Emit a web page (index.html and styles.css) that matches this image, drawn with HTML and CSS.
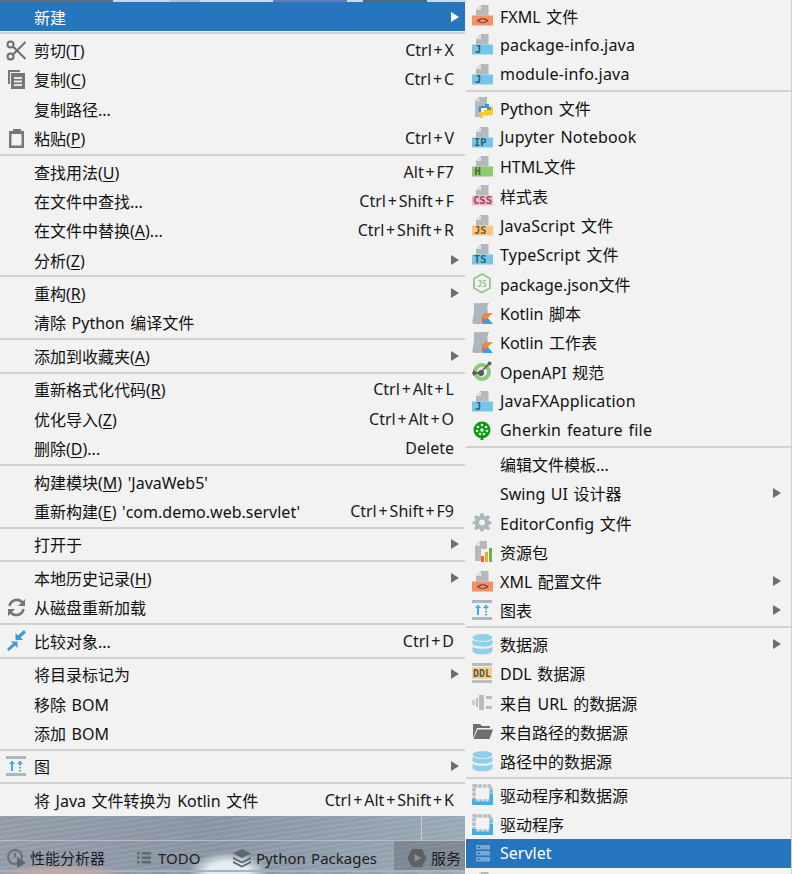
FILE: index.html
```html
<!DOCTYPE html>
<html lang="zh-CN">
<head>
<meta charset="utf-8">
<title>Context menu</title>
<link rel="stylesheet" href="styles.css">
</head>
<body>
<svg class="defs" width="0" height="0" aria-hidden="true">
  <defs>
    <symbol id="page" viewBox="0 0 21 21">
      <path d="M9 0H16.500V10.500H4V5Z" fill="#b3b9bd"/>
      <path d="M9 .5V5H4.300Z" fill="#dfe1e2"/>
    </symbol>
    <symbol id="diagram" viewBox="0 0 21 21">
      <rect x="0" y="0" width="20" height="3" fill="#adb6bb"/>
      <rect x="0" y="17" width="20" height="3" fill="#adb6bb"/>
      <path d="M6 4.500 9 8H7V15H5V8H3ZM14 4.500 17 8H15V9.500H13V8H11ZM13 11H15V12.500H13ZM13 14H15V15.500H13Z" fill="#3fb0de"/>
    </symbol>
    <symbol id="db" viewBox="0 0 21 21">
      <ellipse cx="10.500" cy="3.500" rx="10" ry="3.500" fill="#8ed0ec"/>
      <path d="M.5 5.500C2 8.500 19 8.500 20.500 5.500V10C19 13.500 2 13.500 .5 10Z" fill="#8ed0ec"/>
      <path d="M.5 12.500C2 15.500 19 15.500 20.500 12.500V17C19 21.500 2 21.500 .5 17Z" fill="#8ed0ec"/>
    </symbol>
    <symbol id="driver" viewBox="0 0 21 21">
      <rect x="2" y="2" width="17" height="15" fill="none" stroke="#b5bdc3" stroke-width="3.500" stroke-dasharray="3.500 1"/>
      <path d="M0 15H3.500V17.500H17.500V10H21V21H0Z" fill="#3fb0e4"/>
      <path d="M17.500 6H21V8.500H17.500Z" fill="#6fc3ea"/>
    </symbol>
    <symbol id="kotlin" viewBox="0 0 21 21">
      <path d="M2 0C6 1 12 -1 17 0C15 4 15 6 16 9L9 21H3C0 21 0 18 1 15C2 11 2 6 2 0Z" fill="#adb6bb"/>
      <path d="M10 21 15 14 21 21Z" fill="#2aa5e5"/>
      <path d="M10 21V14L14 10 17 13Z" fill="#ef5d57"/>
      <path d="M13.500 17 21 10H15L10.500 15Z" fill="#f18d2d"/>
    </symbol>
  </defs>
</svg>

<div class="stage">
  <div class="left">
    <div class="strip"></div>
    <div class="menu menu-left">
      <div class="row active"><span class="slot"></span><span class="label">新建</span><span class="arrow"></span></div>
      <div class="sep"></div>
      <div class="row"><span class="slot">
        <svg class="icon" viewBox="0 0 21 21"><g fill="none" stroke="#6e6e6e" stroke-width="2"><circle cx="4.500" cy="4.500" r="3"/><circle cx="4.500" cy="16.500" r="3"/><path d="M7 6.500 19.500 19M7 14.500 19.500 2"/></g></svg>
      </span><span class="label">剪切(<u>T</u>)</span><span class="key">Ctrl<span class="plus">+</span>X</span></div>
      <div class="row"><span class="slot">
        <svg class="icon" viewBox="0 0 21 21"><path d="M2 1H14V3H4V15H2Z" fill="#767676"/><path d="M5 4H19V20H5Z" fill="#767676"/><path d="M8 8H16V10H8ZM8 11.500H16V13.500H8ZM8 15H16V17H8Z" fill="#e6e6e6"/></svg>
      </span><span class="label">复制(<u>C</u>)</span><span class="key">Ctrl<span class="plus">+</span>C</span></div>
      <div class="row"><span class="slot"></span><span class="label">复制路径...</span></div>
      <div class="row"><span class="slot">
        <svg class="icon" viewBox="0 0 21 21"><path d="M3 3H7V1H15V3H18V20H3ZM5.500 6V17.500H15.500V6Z" fill="#767676"/></svg>
      </span><span class="label">粘贴(<u>P</u>)</span><span class="key">Ctrl<span class="plus">+</span>V</span></div>
      <div class="sep"></div>
      <div class="row"><span class="slot"></span><span class="label">查找用法(<u>U</u>)</span><span class="key">Alt<span class="plus">+</span>F7</span></div>
      <div class="row"><span class="slot"></span><span class="label">在文件中查找...</span><span class="key">Ctrl<span class="plus">+</span>Shift<span class="plus">+</span>F</span></div>
      <div class="row"><span class="slot"></span><span class="label">在文件中替换(<u>A</u>)...</span><span class="key">Ctrl<span class="plus">+</span>Shift<span class="plus">+</span>R</span></div>
      <div class="row"><span class="slot"></span><span class="label">分析(<u>Z</u>)</span><span class="arrow"></span></div>
      <div class="sep"></div>
      <div class="row"><span class="slot"></span><span class="label">重构(<u>R</u>)</span><span class="arrow"></span></div>
      <div class="row"><span class="slot"></span><span class="label">清除 Python 编译文件</span></div>
      <div class="sep"></div>
      <div class="row"><span class="slot"></span><span class="label">添加到收藏夹(<u>A</u>)</span><span class="arrow"></span></div>
      <div class="sep"></div>
      <div class="row"><span class="slot"></span><span class="label">重新格式化代码(<u>R</u>)</span><span class="key">Ctrl<span class="plus">+</span>Alt<span class="plus">+</span>L</span></div>
      <div class="row"><span class="slot"></span><span class="label">优化导入(<u>Z</u>)</span><span class="key">Ctrl<span class="plus">+</span>Alt<span class="plus">+</span>O</span></div>
      <div class="row"><span class="slot"></span><span class="label">删除(<u>D</u>)...</span><span class="key">Delete</span></div>
      <div class="sep"></div>
      <div class="row"><span class="slot"></span><span class="label">构建模块(<u>M</u>) 'JavaWeb5'</span></div>
      <div class="row"><span class="slot"></span><span class="label">重新构建(<u>E</u>) 'com.demo.web.servlet'</span><span class="key">Ctrl<span class="plus">+</span>Shift<span class="plus">+</span>F9</span></div>
      <div class="sep"></div>
      <div class="row"><span class="slot"></span><span class="label">打开于</span><span class="arrow"></span></div>
      <div class="sep"></div>
      <div class="row"><span class="slot"></span><span class="label">本地历史记录(<u>H</u>)</span><span class="arrow"></span></div>
      <div class="row"><span class="slot">
        <svg class="icon" viewBox="0 0 21 21"><g fill="none" stroke="#767676" stroke-width="2.600"><path d="M3.500 9A7.500 7.500 0 0 1 16 5L18 7"/><path d="M17.500 12A7.500 7.500 0 0 1 5 16L3 14"/></g><path d="M19 2V9H12ZM2 19V12H9Z" fill="#767676"/></svg>
      </span><span class="label">从磁盘重新加载</span></div>
      <div class="sep"></div>
      <div class="row"><span class="slot">
        <svg class="icon" viewBox="0 0 21 21"><path d="M1 19 7 13.500 4.500 11.500H11.500V18L9 15.500 3 21Z" fill="#3d9bd4"/><path d="M20 3.500 14.500 8.500 17 11H9.500V4L12 6.500 18 1Z" fill="#3d9bd4" transform="translate(0 -1)"/></svg>
      </span><span class="label">比较对象...</span><span class="key">Ctrl<span class="plus">+</span>D</span></div>
      <div class="sep"></div>
      <div class="row"><span class="slot"></span><span class="label">将目录标记为</span><span class="arrow"></span></div>
      <div class="row"><span class="slot"></span><span class="label">移除 BOM</span></div>
      <div class="row"><span class="slot"></span><span class="label">添加 BOM</span></div>
      <div class="sep"></div>
      <div class="row"><span class="slot"><svg class="icon"><use href="#diagram"/></svg></span><span class="label">图</span><span class="arrow"></span></div>
      <div class="sep"></div>
      <div class="row"><span class="slot"></span><span class="label">将 Java 文件转换为 Kotlin 文件</span><span class="key">Ctrl<span class="plus">+</span>Alt<span class="plus">+</span>Shift<span class="plus">+</span>K</span></div>
    </div>
    <div class="desktop">
      <div class="desktop-top"><span class="tick"></span></div>
      <div class="toolbar">
        <span class="tool tool-perf">
          <svg class="tool-icon" viewBox="0 0 20 20"><circle cx="9" cy="9" r="7" fill="none" stroke="#6d7278" stroke-width="2"/><path d="M9 5V9" stroke="#6d7278" stroke-width="2"/><path d="M11 9 20 15 11 20Z" fill="#60656a"/></svg>
          性能分析器
        </span>
        <span class="tool tool-todo">
          <svg class="tool-icon small" viewBox="0 0 16 14"><path d="M1 1H3.500V3.500H1ZM5.500 1H15V3.500H5.500ZM1 5.500H3.500V8H1ZM5.500 5.500H15V8H5.500ZM1 10H3.500V12.500H1ZM5.500 10H15V12.500H5.500Z" fill="#626870"/></svg>
          TODO
        </span>
        <span class="tool tool-py">
          <svg class="tool-icon" viewBox="0 0 20 20"><path d="M10 1 19 5.500 10 10 1 5.500Z" fill="#5f666d"/><path d="M1 9 10 13.500 19 9V11L10 15.500 1 11ZM1 13 10 17.500 19 13V15L10 19.500 1 15Z" fill="#5f666d"/></svg>
          Python Packages
        </span>
        <span class="tool tool-service">
          <svg class="tool-icon" viewBox="0 0 20 20"><path d="M5 1H15L19.500 10 15 19H5L.5 10Z" fill="#5b6167"/><path d="M7.500 6 14 10 7.500 14Z" fill="#8d8f90"/></svg>
          服务
        </span>
      </div>
      <div class="desktop-bottom"></div>
    </div>
  </div>

  <div class="menu menu-right">
    <div class="row"><span class="slot"><svg class="icon"><use href="#page"/><rect y="10.500" width="21" height="10" fill="#f98f64"/><text x="10.500" y="18.800" class="tag tag-xml">&lt;&gt;</text></svg></span><span class="label">FXML 文件</span></div>
    <div class="row"><span class="slot"><svg class="icon"><use href="#page"/><rect y="10.500" width="21" height="10" fill="#74c7e8"/><text x="3" y="19.200" class="tag tag-blue">J</text></svg></span><span class="label latin">package-info.java</span></div>
    <div class="row"><span class="slot"><svg class="icon"><use href="#page"/><rect y="10.500" width="21" height="10" fill="#74c7e8"/><text x="3" y="19.200" class="tag tag-blue">J</text></svg></span><span class="label latin">module-info.java</span></div>
    <div class="sep"></div>
    <div class="row"><span class="slot">
      <svg class="icon" viewBox="0 0 21 21"><path d="M7 0H15V9H9V20H3V4Z" fill="#b3b9bd"/><path d="M7.500 .5V4.500H3.500Z" fill="#dfe1e2"/><path d="M13 7H17V10H21V15H15V11H9V15H6.500V10.500Q6.500 9 8 9H13Z" fill="#3f96d1"/><path d="M21 10.500H23V18Q23 19.500 21 19.500H13V22H9.500V16H14V14H21Z" fill="#f6c92f" transform="translate(-2 -1)"/></svg>
    </span><span class="label">Python 文件</span></div>
    <div class="row"><span class="slot"><svg class="icon"><use href="#page"/><rect y="10.500" width="21" height="10" fill="#74c7e8"/><text x="2" y="19.200" class="tag tag-blue">IP</text></svg></span><span class="label latin">Jupyter Notebook</span></div>
    <div class="row"><span class="slot"><svg class="icon"><use href="#page"/><rect y="10.500" width="21" height="10" fill="#8fc86f"/><text x="2.500" y="19.200" class="tag tag-green">H</text></svg></span><span class="label">HTML文件</span></div>
    <div class="row"><span class="slot"><svg class="icon"><use href="#page"/><rect y="10.500" width="21" height="10" fill="#f9b6c4"/><text x="1" y="19.200" class="tag tag-pink">CSS</text></svg></span><span class="label">样式表</span></div>
    <div class="row"><span class="slot"><svg class="icon"><use href="#page"/><rect y="10.500" width="21" height="10" fill="#f9c77c"/><text x="2" y="19.200" class="tag tag-orange">JS</text></svg></span><span class="label latin">JavaScript 文件</span></div>
    <div class="row"><span class="slot"><svg class="icon"><use href="#page"/><rect y="10.500" width="21" height="10" fill="#74c7e8"/><text x="2" y="19.200" class="tag tag-blue">TS</text></svg></span><span class="label latin">TypeScript 文件</span></div>
    <div class="row"><span class="slot">
      <svg class="icon" viewBox="0 0 21 21"><path d="M10 1 18 5.500V15L10 19.500 2 15V5.500Z" fill="none" stroke="#95c58b" stroke-width="1.800"/><text x="10" y="14" class="tag tag-node">JS</text></svg>
    </span><span class="label">package.json文件</span></div>
    <div class="row"><span class="slot"><svg class="icon"><use href="#kotlin"/></svg></span><span class="label">Kotlin 脚本</span></div>
    <div class="row"><span class="slot"><svg class="icon"><use href="#kotlin"/></svg></span><span class="label">Kotlin 工作表</span></div>
    <div class="row"><span class="slot">
      <svg class="icon" viewBox="0 0 21 21"><circle cx="10" cy="11" r="9" fill="#8fc77e"/><circle cx="10" cy="11" r="5" fill="#f2f2f2"/><path d="M0 12H8L17 3" fill="none" stroke="#5b5b55" stroke-width="1.600"/><circle cx="9" cy="12" r="3" fill="#5b5b55"/><circle cx="17.500" cy="2.500" r="2" fill="#5b5b55"/><path d="M1 9 6 12 1 15Z" fill="#5b5b55"/></svg>
    </span><span class="label">OpenAPI 规范</span></div>
    <div class="row"><span class="slot"><svg class="icon"><use href="#page"/><rect y="10.500" width="21" height="10" fill="#74c7e8"/><text x="3" y="19.200" class="tag tag-blue">J</text></svg></span><span class="label latin">JavaFXApplication</span></div>
    <div class="row"><span class="slot">
      <svg class="icon" viewBox="0 0 21 21"><circle cx="10" cy="10" r="8.500" fill="#0b9a16"/><path d="M8 20H12L10 17Z" fill="#0b9a16"/><g fill="#eaf6e4"><circle cx="10" cy="5" r="1.300"/><circle cx="6" cy="7" r="1.300"/><circle cx="14" cy="7" r="1.300"/><circle cx="5" cy="11" r="1.300"/><circle cx="15" cy="11" r="1.300"/><circle cx="8" cy="14" r="1.300"/><circle cx="12" cy="14" r="1.300"/><circle cx="10" cy="10" r="1.800"/></g></svg>
    </span><span class="label latin">Gherkin feature file</span></div>
    <div class="sep"></div>
    <div class="row"><span class="slot"></span><span class="label">编辑文件模板...</span></div>
    <div class="row"><span class="slot"></span><span class="label">Swing UI 设计器</span><span class="arrow"></span></div>
    <div class="row"><span class="slot">
      <svg class="icon" viewBox="0 0 21 21"><path d="M8 1H12L12.500 4 14.500 4.800 17 3 19.500 5.500 17.500 8 18.300 10 21 10.500V13.500L18.300 14 17.500 16 19.500 18.500 17 21 14.500 19 12.500 19.800 12 22H8L7.500 19.800 5.500 19 3 21 .5 18.500 2.500 16 1.700 14-1 13.500V10.500L1.700 10 2.500 8 .5 5.500 3 3 5.500 4.800 7.500 4Z" fill="#adb6bb" transform="translate(1.500 .500) scale(.85)"/><circle cx="10" cy="10.500" r="3" fill="#f2f2f2"/></svg>
    </span><span class="label">EditorConfig 文件</span></div>
    <div class="row"><span class="slot">
      <svg class="icon" viewBox="0 0 21 21"><path d="M8 0H15V8H9V20H3V5Z" fill="#b3b9bd"/><path d="M8 .5V5H3.500Z" fill="#dfe1e2"/><rect x="9" y="15" width="3" height="6" fill="#f26522"/><rect x="13" y="11" width="3" height="10" fill="#f9a233"/><rect x="17" y="7" width="3" height="14" fill="#6db33f"/></svg>
    </span><span class="label">资源包</span></div>
    <div class="row"><span class="slot"><svg class="icon"><use href="#page"/><rect y="10.500" width="21" height="10" fill="#f98f64"/><text x="10.500" y="18.800" class="tag tag-xml">&lt;&gt;</text></svg></span><span class="label">XML 配置文件</span><span class="arrow"></span></div>
    <div class="row"><span class="slot"><svg class="icon"><use href="#diagram"/></svg></span><span class="label">图表</span><span class="arrow"></span></div>
    <div class="sep"></div>
    <div class="row"><span class="slot"><svg class="icon"><use href="#db"/></svg></span><span class="label">数据源</span><span class="arrow"></span></div>
    <div class="row"><span class="slot">
      <svg class="icon" viewBox="0 0 21 21"><rect y="0" width="20" height="3" fill="#b5bdc3"/><rect y="17" width="20" height="3" fill="#b5bdc3"/><rect y="4" width="20" height="12" fill="#f8cf8a"/><text x="10" y="13.500" class="tag tag-ddl">DDL</text></svg>
    </span><span class="label">DDL 数据源</span></div>
    <div class="row"><span class="slot">
      <svg class="icon" viewBox="0 0 21 21"><path d="M4 6H6V15H4ZM7 3H12V18H7Z" fill="#b5bdc3"/><path d="M14 4H20V7H14ZM14 14H20V17H14Z" fill="#b5bdc3"/><rect x="0" y="8" width="3" height="5" fill="#c9cfd3"/></svg>
    </span><span class="label">来自 URL 的数据源</span></div>
    <div class="row"><span class="slot">
      <svg class="icon" viewBox="0 0 21 21"><path d="M1 3H8L10 5H18V7H5L1 17Z" fill="#6e6e6e"/><path d="M5.500 8.500H21L17.500 18H1.500Z" fill="#6e6e6e"/></svg>
    </span><span class="label">来自路径的数据源</span></div>
    <div class="row"><span class="slot"><svg class="icon"><use href="#db"/></svg></span><span class="label">路径中的数据源</span></div>
    <div class="sep"></div>
    <div class="row"><span class="slot"><svg class="icon"><use href="#driver"/></svg></span><span class="label">驱动程序和数据源</span></div>
    <div class="row"><span class="slot"><svg class="icon"><use href="#driver"/></svg></span><span class="label">驱动程序</span></div>
    <div class="row active"><span class="slot">
      <svg class="icon" viewBox="0 0 21 21"><path d="M4 2H18V6.500H4ZM4 8H18V12.500H4ZM4 14H18V18.500H4Z" fill="#7ba7cf"/><path d="M5.500 3.500H8V5H5.500ZM5.500 9.500H8V11H5.500ZM5.500 15.500H8V17H5.500Z" fill="#2675bf"/></svg>
    </span><span class="label">Servlet</span></div>
    <div class="row"><span class="slot"><svg class="icon"><use href="#page"/></svg></span></div>
  </div>
</div>
</body>
</html>
```

FILE: styles.css
```css
:root {
  --row: 29.33px;
  --sep: 4.2px;
  --menu: #f2f2f2;
  --line: #d1d1d1;
  --select: #2675bf;
}

html, body {
  margin: 0;
  height: 874px;
  overflow: hidden;
}

body {
  font-family: "Noto Sans", "Noto Sans CJK SC", sans-serif;
  font-size: 16px;
  word-spacing: 1.4px;
  color: #111;
}

.defs {
  display: block;
  height: 0;
}

.stage {
  display: flex;
  width: 792px;
  height: 874px;
  overflow: hidden;
}

.left {
  display: flex;
  flex-direction: column;
  width: 466px;
  flex: none;
  background: var(--menu);
}

.strip {
  height: 1.9px;
  flex: none;
  background:
    linear-gradient(90deg,
      #39404a 0 113px,
      #c5c9d2 113px 170px,
      #a9acb0 170px 200px,
      #c9cbdc 200px 273px,
      #3b4fa8 273px 347px,
      #c9cbdc 347px 363px,
      #333 363px 427px,
      #c9cbdc 427px);
  opacity: 0.75;
}

.menu {
  background: var(--menu);
  flex: none;
}

.menu-left {
  width: 465px;
  padding-bottom: 1.5px;
}

.menu-right {
  width: 326px;
  height: 874px;
  padding-top: .9px;
  box-sizing: border-box;
  border-right: 1px solid var(--line);
}

.row {
  display: flex;
  align-items: center;
  height: var(--row);
  padding-right: 11px;
  white-space: nowrap;
}

.menu-right .row {
  padding-right: 10px;
}

.row.active {
  background: var(--select);
  color: #fff;
}

.slot {
  display: flex;
  align-items: center;
  width: 34px;
  height: 100%;
  padding-left: 6px;
  box-sizing: border-box;
  flex: none;
}

.label {
  flex: 1;
}

.latin {
  letter-spacing: .2px;
}

.label u {
  text-underline-offset: 2px;
  text-decoration-thickness: 1px;
}

.key {
  flex: none;
  color: #1a1a1a;
}

.plus {
  margin: 0 1.85px;
}

.arrow {
  width: 0;
  height: 0;
  flex: none;
  margin-left: auto;
  border-left: 8px solid #6e6e6e;
  border-top: 5.5px solid transparent;
  border-bottom: 5.5px solid transparent;
  margin-right: -5px;
}

.menu-right .arrow {
  margin-right: 0;
}

.active .arrow {
  border-left-color: #fff;
}

.sep {
  height: var(--sep);
  display: flex;
  align-items: center;
}

.sep::before {
  content: "";
  display: block;
  width: 100%;
  height: 2px;
  background: var(--line);
}

.icon {
  display: block;
  width: 21px;
  height: 21px;
  overflow: visible;
}

.tag {
  font-family: "DejaVu Sans Mono", monospace;
  font-size: 10.5px;
  font-weight: 700;
}

.tag-xml { fill: #6e4636; text-anchor: middle; font-size: 10px; }
.tag-blue { fill: #2f5f78; }
.tag-green { fill: #3c6b2b; }
.tag-pink { fill: #8a4b5c; }
.tag-orange { fill: #7a5a24; }
.tag-node { fill: #95c58b; text-anchor: middle; font-size: 8px; }
.tag-ddl { fill: #5a5a50; text-anchor: middle; font-size: 10px; }

.desktop {
  flex: 1;
  display: flex;
  flex-direction: column;
  margin-right: 1px;
  background:
    radial-gradient(ellipse 40px 20px at 228px 56px, #e4ecf3 0 50%, transparent 100%),
    radial-gradient(ellipse 70px 10px at 60px 58px, #c9a59f 0 40%, transparent 100%),
    repeating-linear-gradient(172deg, rgba(255, 255, 255, .04) 0 2px, rgba(0, 0, 0, .03) 2px 5px),
    linear-gradient(90deg, #98a0ae 0, #8c98a6 45%, #9dadbb 100%);
}

.desktop-top {
  display: flex;
  height: 24px;
  flex: none;
  border-bottom: 1px solid #b9bec2;
}

.tick {
  width: 1px;
  height: 100%;
  margin-left: 421px;
  background: #c3c9cd;
}

.toolbar {
  display: flex;
  align-items: center;
  height: 31px;
  padding-top: 4px;
  box-sizing: border-box;
  flex: none;
  font-size: 15px;
  color: #1d1d1d;
  border-bottom: 2px solid #a9b2b9;
}

.tool {
  display: flex;
  align-items: center;
  height: 100%;
  flex: none;
}

.tool-icon {
  display: block;
  width: 20px;
  height: 20px;
  margin-right: 4px;
  flex: none;
}

.tool-icon.small {
  width: 16px;
  height: 14px;
  margin-right: 6px;
}

.tool-perf { padding-left: 6px; width: 136px; box-sizing: border-box; }
.tool-todo { width: 96px; }
.tool-py { width: 162px; }
.tool-service {
  width: 71px;
  height: auto;
  align-self: stretch;
  margin-top: -4px;
  padding: 4px 0 0 13px;
  box-sizing: border-box;
  background: rgba(60, 64, 68, .28);
}
.desktop-bottom {
  flex: 1;
}
```
